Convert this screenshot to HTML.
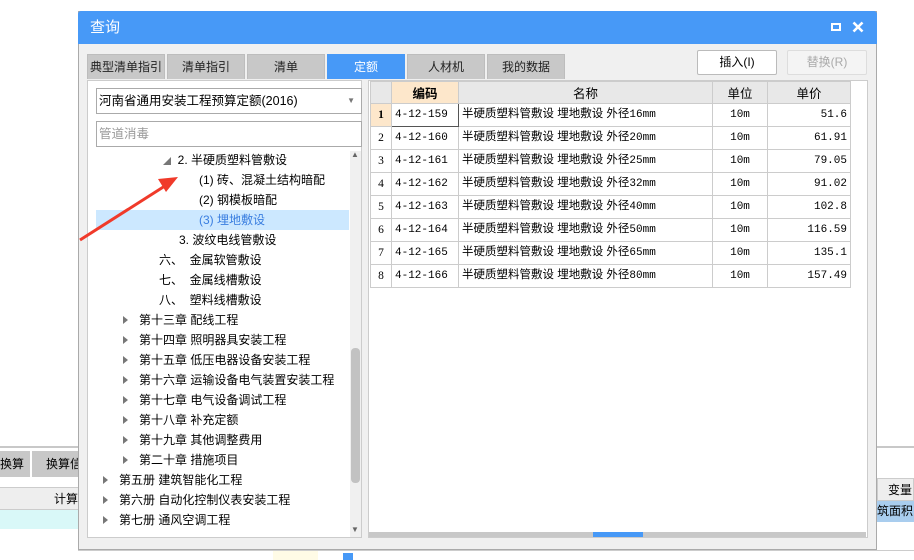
<!DOCTYPE html>
<html><head><meta charset="utf-8"><style>
*{margin:0;padding:0;box-sizing:border-box}
body{width:914px;height:560px;position:relative;overflow:hidden;background:#fff;font-family:"Liberation Sans","Noto Sans CJK SC",sans-serif;font-size:12px;color:#000}
.a{position:absolute;white-space:nowrap;overflow:hidden}
.tab{position:absolute;top:54px;height:25px;background:#c8c8c8;border:1px solid #bdbdbd;border-bottom:none;text-align:center;line-height:25px;font-size:12px;color:#222;white-space:nowrap;overflow:hidden}
.tr{position:absolute;height:20px;line-height:20px;font-size:12px;white-space:nowrap}
.tri{display:inline-block;width:0;height:0;border-left:5px solid #777;border-top:4px solid transparent;border-bottom:4px solid transparent;position:absolute;top:6px}
table{border-collapse:collapse;position:absolute;left:370px;top:81px;table-layout:fixed}
td{border:1px solid #ccc;height:23px;font-size:11.5px;padding:0 3px;white-space:nowrap;overflow:hidden;vertical-align:middle;line-height:21px}
th{border:1px solid #ccc;height:22px;background:#e8e8e8;font-weight:normal;font-size:12.5px}
.m{font-family:"Liberation Mono","Noto Sans CJK SC",monospace;font-size:11px}
</style></head><body>
<!-- background app -->
<div class="a" style="left:0;top:446px;width:914px;height:2px;background:#c8c8c8"></div>
<div class="a" style="left:0;top:451px;width:30px;height:26px;background:#c8c8c8;line-height:26px;font-size:12px">换算</div>
<div class="a" style="left:32px;top:451px;width:46px;height:26px;background:#c8c8c8;line-height:26px;font-size:12px;padding-left:14px">换算信</div>
<div class="a" style="left:0;top:487px;width:78px;height:23px;background:#eee;border-top:1px solid #ccc;border-bottom:1px solid #ccc;text-align:right;line-height:22px;font-size:12px">计算</div>
<div class="a" style="left:0;top:510px;width:78px;height:19px;background:#d9f8f8"></div>
<div class="a" style="left:877px;top:478px;width:37px;height:23px;background:#eee;border:1px solid #ccc;line-height:22px;font-size:12px;padding-left:10px">变量</div>
<div class="a" style="left:877px;top:501px;width:37px;height:21px;background:#a9cdee;line-height:21px;font-size:12px">筑面积</div>
<!-- dialog -->
<div class="a" style="left:78px;top:11px;width:799px;height:539px;background:#f0f0f0;border:1px solid #aaa"></div>
<div class="a" style="left:78px;top:11px;width:799px;height:33px;background:#4799f7;border-radius:3px 3px 0 0;color:#fff;font-size:15px;line-height:33px;padding-left:12px">查询</div>
<div class="a" style="left:831px;top:23px;width:10px;height:8px;border:2px solid #fff"></div>
<svg class="a" style="left:852px;top:21px" width="12" height="12"><path d="M1.5 1.5L10.5 10.5M10.5 1.5L1.5 10.5" stroke="#fff" stroke-width="2.6"/></svg>
<div class="tab" style="left:87px;width:78px">典型清单指引</div>
<div class="tab" style="left:167px;width:78px">清单指引</div>
<div class="tab" style="left:247px;width:78px">清单</div>
<div class="tab" style="left:327px;width:78px;background:#4799f7;border-color:#4799f7;color:#fff">定额</div>
<div class="tab" style="left:407px;width:78px">人材机</div>
<div class="tab" style="left:487px;width:78px">我的数据</div>
<div class="a" style="left:697px;top:50px;width:80px;height:25px;background:#fff;border:1px solid #bbb;border-radius:2px;text-align:center;line-height:23px;font-size:12px">插入(I)</div>
<div class="a" style="left:787px;top:50px;width:80px;height:25px;background:#f4f4f4;border:1px solid #ddd;border-radius:2px;text-align:center;line-height:23px;font-size:12px;color:#aaa">替换(R)</div>
<!-- left panel -->
<div class="a" style="left:87px;top:80px;width:275px;height:458px;background:#fff;border:1px solid #ccc"></div>
<div class="a" style="left:96px;top:88px;width:266px;height:26px;border:1px solid #aaa;line-height:24px;font-size:12.5px;padding-left:2px">河南省通用安装工程预算定额(2016)<span style="position:absolute;right:6px;font-size:8px;color:#777">▼</span></div>
<div class="a" style="left:96px;top:121px;width:266px;height:26px;border:1px solid #aaa;line-height:24px;font-size:12.5px;padding-left:2px;color:#999">管道消毒</div>
<div class="a" style="left:96px;top:210px;width:253px;height:20px;background:#cce8ff"></div>
<div class="a" style="left:350px;top:151px;width:11px;height:386px;background:#f0f0f0"></div>
<div class="a" style="left:351px;top:348px;width:9px;height:135px;background:#c2c2c2;border-radius:4px"></div>
<div class="a" style="left:351px;top:150px;font-size:8px;color:#666">▲</div>
<div class="a" style="left:351px;top:525px;font-size:8px;color:#666">▼</div>
<div style="position:absolute;left:0;top:0">
<div class="tr" style="left:163px;top:150px"><span style="color:#777;font-size:8px">◢</span>&nbsp; 2. 半硬质塑料管敷设</div>
<div class="tr" style="left:199px;top:170px">(1) 砖、混凝土结构暗配</div>
<div class="tr" style="left:199px;top:190px">(2) 钢模板暗配</div>
<div class="tr" style="left:199px;top:210px;color:#3a7ee0">(3) 埋地敷设</div>
<div class="tr" style="left:179px;top:230px">3. 波纹电线管敷设</div>
<div class="tr" style="left:159px;top:250px">六、&nbsp; 金属软管敷设</div>
<div class="tr" style="left:159px;top:270px">七、&nbsp; 金属线槽敷设</div>
<div class="tr" style="left:159px;top:290px">八、&nbsp; 塑料线槽敷设</div>
<div class="tr" style="left:123px;top:310px"><i class="tri" style="left:0"></i><span style="margin-left:16px">第十三章 配线工程</span></div>
<div class="tr" style="left:123px;top:330px"><i class="tri" style="left:0"></i><span style="margin-left:16px">第十四章 照明器具安装工程</span></div>
<div class="tr" style="left:123px;top:350px"><i class="tri" style="left:0"></i><span style="margin-left:16px">第十五章 低压电器设备安装工程</span></div>
<div class="tr" style="left:123px;top:370px"><i class="tri" style="left:0"></i><span style="margin-left:16px">第十六章 运输设备电气装置安装工程</span></div>
<div class="tr" style="left:123px;top:390px"><i class="tri" style="left:0"></i><span style="margin-left:16px">第十七章 电气设备调试工程</span></div>
<div class="tr" style="left:123px;top:410px"><i class="tri" style="left:0"></i><span style="margin-left:16px">第十八章 补充定额</span></div>
<div class="tr" style="left:123px;top:430px"><i class="tri" style="left:0"></i><span style="margin-left:16px">第十九章 其他调整费用</span></div>
<div class="tr" style="left:123px;top:450px"><i class="tri" style="left:0"></i><span style="margin-left:16px">第二十章 措施项目</span></div>
<div class="tr" style="left:103px;top:470px"><i class="tri" style="left:0"></i><span style="margin-left:16px">第五册 建筑智能化工程</span></div>
<div class="tr" style="left:103px;top:490px"><i class="tri" style="left:0"></i><span style="margin-left:16px">第六册 自动化控制仪表安装工程</span></div>
<div class="tr" style="left:103px;top:510px"><i class="tri" style="left:0"></i><span style="margin-left:16px">第七册 通风空调工程</span></div>
</div>
<!-- right panel -->
<div class="a" style="left:368px;top:80px;width:500px;height:458px;background:#fff;border:1px solid #ccc"></div>
<div class="a" style="left:369px;top:532px;width:497px;height:5px;background:#c8c8c8"></div>
<div class="a" style="left:593px;top:532px;width:50px;height:5px;background:#4799f7"></div>
<table>
<colgroup><col style="width:21px"><col style="width:67px"><col style="width:254px"><col style="width:55px"><col style="width:83px"></colgroup>
<tr><th style="background:#e8e8e8"></th><th style="background:#fde7cb;font-weight:bold">编码</th><th>名称</th><th>单位</th><th>单价</th></tr>
<tr><td style="text-align:center;background:#fde7cb;font-family:'Liberation Serif',serif;font-weight:bold">1</td><td class="m" style="border:1px solid #555">4-12-159</td><td>半硬质塑料管敷设 埋地敷设 外径<span class="m">16mm</span></td><td class="m" style="text-align:center">10m</td><td class="m" style="text-align:right">51.6</td></tr>
<tr><td style="text-align:center;font-family:'Liberation Serif',serif">2</td><td class="m">4-12-160</td><td>半硬质塑料管敷设 埋地敷设 外径<span class="m">20mm</span></td><td class="m" style="text-align:center">10m</td><td class="m" style="text-align:right">61.91</td></tr>
<tr><td style="text-align:center;font-family:'Liberation Serif',serif">3</td><td class="m">4-12-161</td><td>半硬质塑料管敷设 埋地敷设 外径<span class="m">25mm</span></td><td class="m" style="text-align:center">10m</td><td class="m" style="text-align:right">79.05</td></tr>
<tr><td style="text-align:center;font-family:'Liberation Serif',serif">4</td><td class="m">4-12-162</td><td>半硬质塑料管敷设 埋地敷设 外径<span class="m">32mm</span></td><td class="m" style="text-align:center">10m</td><td class="m" style="text-align:right">91.02</td></tr>
<tr><td style="text-align:center;font-family:'Liberation Serif',serif">5</td><td class="m">4-12-163</td><td>半硬质塑料管敷设 埋地敷设 外径<span class="m">40mm</span></td><td class="m" style="text-align:center">10m</td><td class="m" style="text-align:right">102.8</td></tr>
<tr><td style="text-align:center;font-family:'Liberation Serif',serif">6</td><td class="m">4-12-164</td><td>半硬质塑料管敷设 埋地敷设 外径<span class="m">50mm</span></td><td class="m" style="text-align:center">10m</td><td class="m" style="text-align:right">116.59</td></tr>
<tr><td style="text-align:center;font-family:'Liberation Serif',serif">7</td><td class="m">4-12-165</td><td>半硬质塑料管敷设 埋地敷设 外径<span class="m">65mm</span></td><td class="m" style="text-align:center">10m</td><td class="m" style="text-align:right">135.1</td></tr>
<tr><td style="text-align:center;font-family:'Liberation Serif',serif">8</td><td class="m">4-12-166</td><td>半硬质塑料管敷设 埋地敷设 外径<span class="m">80mm</span></td><td class="m" style="text-align:center">10m</td><td class="m" style="text-align:right">157.49</td></tr>
</table>
<!-- red arrow -->
<svg class="a" style="left:0;top:0" width="914" height="560"><path d="M80 240 L168 184" stroke="#f03a2a" stroke-width="3" fill="none"/><path d="M178 177 L158 179 L166 192 Z" fill="#f03a2a"/></svg>
<!-- bottom strip -->
<div class="a" style="left:78px;top:550px;width:836px;height:10px;background:#fff;border-top:1px solid #ccc"></div>
<div class="a" style="left:273px;top:551px;width:45px;height:9px;background:#fffbe6"></div>
<div class="a" style="left:343px;top:553px;width:10px;height:7px;background:#4799f7"></div>
</body></html>
